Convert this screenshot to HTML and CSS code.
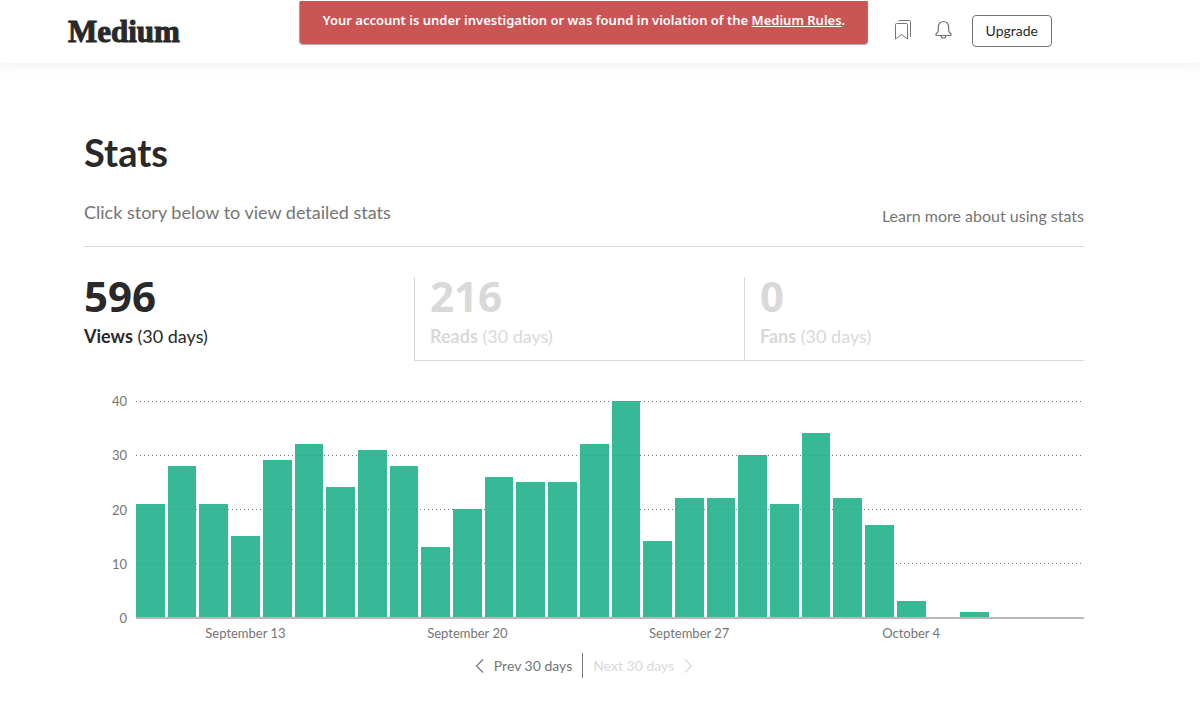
FILE: index.html
```html
<!DOCTYPE html>
<html lang="en">
<head>
<meta charset="utf-8">
<meta name="viewport" content="width=device-width, initial-scale=1">
<title>Stats – Medium</title>
<link rel="stylesheet" href="styles.css">
</head>
<body>
<header class="topbar">
  <div class="topbar-inner">
    <a class="logo" href="#">Medium</a>
    <nav class="actions" aria-label="Account">
      <a class="icon-link" href="#" aria-label="Reading list">
        <svg width="18" height="20" viewBox="0 0 18 20" fill="none" stroke="#757575"><path d="M1.5 4.5q0-1 1-1h10q1 0 1 1v14.500l-6-4.500-6 4.500z"/><path d="M4.500 1.500q.3-1 1.200-1h9.800q1 0 1 1v15.300"/></svg>
      </a>
      <a class="icon-link" href="#" aria-label="Notifications">
        <svg width="17" height="20" viewBox="0 0 17 20" fill="none" stroke="#757575" stroke-width="1.2"><path d="M3.300 6.700a5.200 5.200 0 0 1 10.400 0v4.100q.2 1.400 2.200 3.200.2.300.2.700v.3q0 .5-.6.500H1.500q-.6 0-.6-.5v-.3q0-.4.200-.7 2-1.800 2.200-3.200z"/><path d="M6 15.500a2.500 2.500 0 0 0 5 0"/></svg>
      </a>
      <button class="upgrade" type="button">Upgrade</button>
    </nav>
  </div>
  <div class="notice" role="alert">Your account is under investigation or was found in violation of the <a href="#">Medium Rules</a>.</div>
</header>
<main class="page">
  <h1 class="title">Stats</h1>
  <div class="intro">
    <p class="hint">Click story below to view detailed stats</p>
    <a class="learn" href="#">Learn more about using stats</a>
  </div>
  <div class="tabs">
    <button class="tab tab-active" type="button"><span class="num">596</span><span class="label"><b>Views</b> (30 days)</span></button>
    <button class="tab" type="button"><span class="num">216</span><span class="label"><b>Reads</b> (30 days)</span></button>
    <button class="tab" type="button"><span class="num">0</span><span class="label"><b>Fans</b> (30 days)</span></button>
  </div>
  <section class="chart" aria-label="Views per day">
    <div class="scale"><span>40</span><span>30</span><span>20</span><span>10</span><span>0</span></div>
    <div class="plot">
      <div class="lines"><i></i><i></i><i></i><i></i></div>
      <div class="bars" id="bars"></div>
    </div>
    <div class="dates">
      <span class="d1">September 13</span><span class="d2">September 20</span><span class="d3">September 27</span><span class="d4">October 4</span>
    </div>
  </section>
  <div class="pager">
    <button class="prev" type="button"><svg width="9" height="14" viewBox="0 0 9 14" fill="none" stroke="currentColor" stroke-width="1.2"><path d="M8 .5 1.500 7 8 13.500"/></svg>Prev 30 days</button>
    <button class="next" type="button" disabled>Next 30 days<svg width="9" height="14" viewBox="0 0 9 14" fill="none" stroke="currentColor" stroke-width="1.2"><path d="M1 .5 7.500 7 1 13.500"/></svg></button>
  </div>
</main>
<script src="chart.js"></script>
</body>
</html>
```
FILE: styles.css
```css
* { box-sizing: border-box; }
body {
  margin: 0;
  background: #fff;
  color: #292929;
  font-family: Lato, "Open Sans", sans-serif;
  font-size: 14px;
}
button { font: inherit; color: inherit; background: none; border: 0; padding: 0; cursor: pointer; }
a { color: inherit; text-decoration: none; }

.topbar {
  position: relative;
  padding: 0 32px 0 0;
  box-shadow: 0 2px 12px 1px rgba(0, 0, 0, .06);
}
.topbar-inner {
  max-width: 1032px;
  height: 63px;
  margin: 0 auto;
  padding-right: 48px;
  display: flex;
  align-items: center;
  justify-content: space-between;
}
.logo {
  font: bold 31px/36px "Liberation Serif", serif;
  -webkit-text-stroke: 1px #292929;
}
.actions { display: flex; align-items: center; padding-bottom: 2px; }
.icon-link { display: flex; margin: 0 23px 2px 0; }
.icon-link + .icon-link { margin-right: 20px; }
.upgrade {
  height: 32px;
  padding: 0 13px;
  border: 1px solid #757575;
  border-radius: 4px;
}
.notice {
  position: absolute;
  top: 1px;
  left: calc(50% - 16px);
  transform: translateX(-50%);
  padding: 9px 23px 14px;
  border-radius: 0 0 4px 4px;
  background: #cb5454;
  box-shadow: 0 1px 1px rgba(0, 0, 0, .35);
  color: #fff;
  font-family: "Noto Sans", sans-serif;
  font-size: 13px;
  font-weight: 600;
  line-height: 20px;
  white-space: nowrap;
}
.notice a { text-decoration: underline; }

.page { padding: 62px 116px 28px 84px; max-width: 1200px; margin: 0 auto; }
.title { margin: 0; font-size: 38px; line-height: 54px; font-weight: 700; }
.intro {
  display: flex;
  justify-content: space-between;
  align-items: flex-start;
  margin-top: 20px;
  height: 48px;
  border-bottom: 1px solid #d9d9d9;
  color: #757575;
}
.hint { margin: 0; font-size: 18px; line-height: 26px; }
.learn { font-size: 16px; line-height: 34px; }

.tabs { display: grid; grid-template-columns: 330px 330px 1fr; margin-top: 30px; }
.tab {
  height: 84px;
  padding-left: 15px;
  display: flex;
  flex-direction: column;
  text-align: left;
  color: #d9d9d9;
  border-left: 1px solid #d9d9d9;
  border-bottom: 1px solid #d9d9d9;
}
.tab-active { padding-left: 0; border: 0; color: #292929; }
.num { font: bold 42px/38px "Noto Sans", sans-serif; }
.label { font-size: 18px; line-height: 42px; }

.chart {
  display: grid;
  grid-template-columns: 43px 1fr;
  column-gap: 9px;
  margin-top: 31px;
  color: #757575;
  font-size: 13px;
}
.scale {
  display: flex;
  flex-direction: column;
  justify-content: space-between;
  line-height: 18px;
  height: 235px;
  margin-bottom: -8px;
  text-align: right;
}
.plot {
  position: relative;
  height: 218px;
  margin-top: 9px;
  border-bottom: 2px solid #b8b8b8;
}
.lines { position: absolute; inset: 0; display: grid; grid-template-rows: repeat(4, 1fr); }
.lines i { background: repeating-linear-gradient(90deg, #757575 0 1px, transparent 1px 4px) top / 100% 1px no-repeat; }
.bars {
  position: absolute;
  inset: 0;
  display: grid;
  grid-template-columns: repeat(30, 1fr);
  column-gap: 3px;
  align-items: end;
}
.bar { background: rgba(20, 173, 134, .85); }
.dates {
  grid-column: 2;
  display: grid;
  grid-template-columns: repeat(30, 1fr);
  column-gap: 3px;
  line-height: 28px;
  white-space: nowrap;
}
.dates span { grid-row: 1; justify-self: center; }
.d1 { grid-column: 1 / 8; }
.d2 { grid-column: 8 / 15; }
.d3 { grid-column: 15 / 22; }
.d4 { grid-column: 22 / 29; }

.pager { display: flex; justify-content: center; margin-top: 6px; color: #757575; line-height: 25px; }
.prev, .next { display: flex; align-items: center; gap: 10px; padding: 0 10px; height: 25px; }
.prev { border-right: 1px solid #757575; }
.next { color: #d9d9d9; }
```
FILE: chart.js
```js
const views = [21, 28, 21, 15, 29, 32, 24, 31, 28, 13, 20, 26, 25, 25, 32, 40, 14, 22, 22, 30, 21, 34, 22, 17, 3, 0, 1, 0, 0, 0];
const bars = document.getElementById("bars");
for (const v of views) {
  const bar = document.createElement("div");
  bar.className = "bar";
  bar.style.height = (v / 40 * 100) + "%";
  bars.append(bar);
}
```
